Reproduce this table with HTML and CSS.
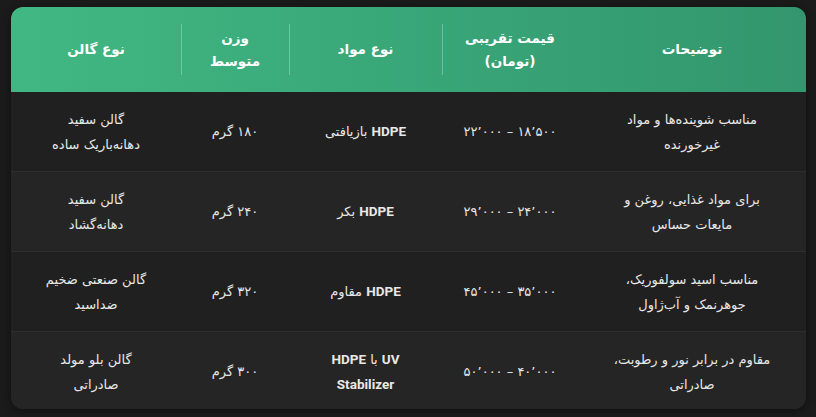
FILE: index.html
```html
<!DOCTYPE html>
<html lang="fa" dir="rtl">
<head>
<meta charset="utf-8">
<link rel="stylesheet" href="styles.css">
</head>
<body>
<div class="card">
  <table class="grid">
    <thead>
      <tr>
        <th class="c-desc">توضیحات</th>
        <th class="c-price sep">قیمت تقریبی<br>(تومان)</th>
        <th class="c-mat sep">نوع مواد</th>
        <th class="c-wt sep">وزن<br>متوسط</th>
        <th class="c-type">نوع گالن</th>
      </tr>
    </thead>
    <tbody>
      <tr>
        <td>مناسب شوینده‌ها و مواد<br>غیرخورنده</td>
        <td>۱۸٬۵۰۰ – ۲۲٬۰۰۰</td>
        <td><span class="latin">HDPE</span> بازیافتی</td>
        <td>۱۸۰ گرم</td>
        <td>گالن سفید<br>دهانه‌باریک ساده</td>
      </tr>
      <tr>
        <td>برای مواد غذایی، روغن و<br>مایعات حساس</td>
        <td>۲۴٬۰۰۰ – ۲۹٬۰۰۰</td>
        <td><span class="latin">HDPE</span> بکر</td>
        <td>۲۴۰ گرم</td>
        <td>گالن سفید<br>دهانه‌گشاد</td>
      </tr>
      <tr>
        <td>مناسب اسید سولفوریک،<br>جوهرنمک و آب‌ژاول</td>
        <td>۳۵٬۰۰۰ – ۴۵٬۰۰۰</td>
        <td><span class="latin">HDPE</span> مقاوم</td>
        <td>۳۲۰ گرم</td>
        <td>گالن صنعتی ضخیم<br>ضداسید</td>
      </tr>
      <tr>
        <td>مقاوم در برابر نور و رطوبت،<br>صادراتی</td>
        <td>۴۰٬۰۰۰ – ۵۰٬۰۰۰</td>
        <td><span class="pair"><span class="latin">UV</span> با <span class="latin">HDPE</span></span><br><span class="latin">Stabilizer</span></td>
        <td>۳۰۰ گرم</td>
        <td>گالن بلو مولد<br>صادراتی</td>
      </tr>
    </tbody>
  </table>
</div>
</body>
</html>
```

FILE: styles.css
```css
html, body {
  margin: 0;
  background: #1b1b1b;
}
body {
  padding: 7px 10px 8px 11px;
  font-family: "DejaVu Sans", "Noto Sans", sans-serif;
}
.card {
  width: 795px;
  height: 402px;
  border-radius: 12px;
  overflow: hidden;
  background: #212121;
  box-shadow: 0 2px 10px rgba(0, 0, 0, 0.45);
}
.grid {
  width: 100%;
  border-collapse: collapse;
  table-layout: fixed;
}
.c-desc { width: 228px; }
.c-price { width: 136px; }
.c-mat { width: 153px; }
.c-wt { width: 108px; }
.c-type { width: 170px; }
thead tr {
  background: linear-gradient(90deg, #41b883 0%, #38a577 55%, #33966e 100%);
}
th {
  height: 85px;
  padding: 0;
  color: #ffffff;
  font-weight: bold;
  font-size: 13.5px;
  line-height: 23px;
  text-align: center;
  vertical-align: middle;
  position: relative;
}
th.sep::after {
  content: "";
  position: absolute;
  left: 0;
  top: 17px;
  bottom: 17px;
  width: 1px;
  background: rgba(255, 255, 255, 0.28);
}
td {
  height: 79px;
  padding: 0;
  color: #e8e8e8;
  font-size: 13px;
  line-height: 25px;
  text-align: center;
  vertical-align: middle;
}
tbody tr + tr td {
  border-top: 1px solid #2e2e2e;
}
tbody tr:nth-child(odd) { background: #202020; }
tbody tr:nth-child(even) { background: #252525; }
.latin {
  font-family: Roboto, "Liberation Sans", sans-serif;
  font-weight: 700;
  font-size: 13.5px;
}
.pair { unicode-bidi: isolate; }
```
